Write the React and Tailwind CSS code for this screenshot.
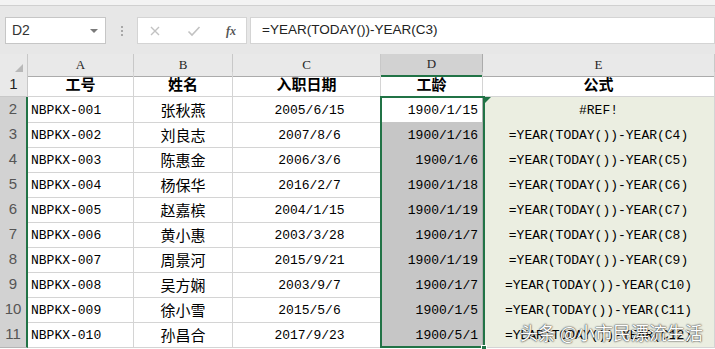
import React from "react";

const ROWS = [
  ["NBPKX-001", "张秋燕", "2005/6/15", "1900/1/15", "#REF!"],
  ["NBPKX-002", "刘良志", "2007/8/6", "1900/1/16", "=YEAR(TODAY())-YEAR(C4)"],
  ["NBPKX-003", "陈惠金", "2006/3/6", "1900/1/6", "=YEAR(TODAY())-YEAR(C5)"],
  ["NBPKX-004", "杨保华", "2016/2/7", "1900/1/18", "=YEAR(TODAY())-YEAR(C6)"],
  ["NBPKX-005", "赵嘉槟", "2004/1/15", "1900/1/19", "=YEAR(TODAY())-YEAR(C7)"],
  ["NBPKX-006", "黄小惠", "2003/3/28", "1900/1/7", "=YEAR(TODAY())-YEAR(C8)"],
  ["NBPKX-007", "周景河", "2015/9/21", "1900/1/19", "=YEAR(TODAY())-YEAR(C9)"],
  ["NBPKX-008", "吴方娴", "2003/9/7", "1900/1/7", "=YEAR(TODAY())-YEAR(C10)"],
  ["NBPKX-009", "徐小雪", "2015/5/6", "1900/1/5", "=YEAR(TODAY())-YEAR(C11)"],
  ["NBPKX-010", "孙昌合", "2017/9/23", "1900/5/1", "=YEAR(TODAY())-YEAR(C12)"],
];

const GRID = "grid grid-cols-[28px_106px_99px_148px_102px_1fr]";
const MONO = "font-['Liberation_Mono','Noto_Sans_CJK_SC',monospace] text-[13px]";
const CJK = "font-['Noto_Sans_CJK_SC',sans-serif]";

function ColHead({ label, active }) {
  return (
    <div
      className={
        active
          ? "flex items-end justify-center pb-[1px] bg-[#d2d2d2] border-r border-[#ababab] border-b-2 border-b-[#217346] text-[13px] text-[#262626] font-['Liberation_Serif',serif]"
          : "flex items-end justify-center pb-[1px] bg-[#e9e9e9] border-r border-[#c8c8c8] border-b border-b-[#ababab] text-[13px] text-[#262626] font-['Liberation_Serif',serif]"
      }
    >
      {label}
    </div>
  );
}

export default function App() {
  return (
    <div className="relative w-[715px] h-[349px] overflow-hidden bg-white">
      {/* ribbon edge */}
      <div className="h-[6px] bg-[#f3f3f3] border-b border-[#d0d0d0]" />

      {/* formula bar */}
      <div className="h-[48px] bg-[#e7e7e7] flex items-start pt-[11px] pl-[5px] font-['Liberation_Sans',sans-serif]">
        <div className="w-[101px] h-[27px] bg-white border border-[#c6c6c6] flex items-center justify-between pl-[6px] pr-[7px]">
          <span className="text-[14px] text-[#333]">D2</span>
          <span className="w-0 h-0 border-l-[4px] border-r-[4px] border-t-[4px] border-l-transparent border-r-transparent border-t-[#7a7a7a]" />
        </div>
        <div className="w-[31px] h-[27px] flex flex-col items-center justify-center gap-[2px]">
          <span className="w-[2px] h-[2px] bg-[#a8a8a8]" />
          <span className="w-[2px] h-[2px] bg-[#a8a8a8]" />
          <span className="w-[2px] h-[2px] bg-[#a8a8a8]" />
        </div>
        <div className="w-[110px] h-[27px] bg-white border border-[#d4d4d4] flex items-center pl-[11px] pr-[10px] justify-between">
          <svg width="12" height="12" viewBox="0 0 12 12">
            <path d="M2 2 L10 10 M10 2 L2 10" stroke="#c2c2c2" strokeWidth="1.4" />
          </svg>
          <svg width="14" height="12" viewBox="0 0 14 12">
            <path d="M1.5 6.5 L5 10 L12.5 2" stroke="#c2c2c2" strokeWidth="1.6" fill="none" />
          </svg>
          <span className="text-[12px] italic font-bold text-[#555] font-['Liberation_Serif',serif]">fx</span>
        </div>
        <div className="ml-[3px] flex-1 h-[27px] bg-white border border-[#d4d4d4] flex items-center pl-[11px] text-[13.5px] text-[#222]">
          =YEAR(TODAY())-YEAR(C3)
        </div>
      </div>

      {/* column headers */}
      <div className={GRID + " h-[18px]"}>
        <div className="flex items-end justify-end pr-[4px] pb-[3px] bg-[#e9e9e9] border-r border-[#c8c8c8] border-b border-b-[#ababab]">
          <svg width="9" height="9" viewBox="0 0 9 9">
            <path d="M9 0 L9 9 L0 9 Z" fill="#b8b8b8" />
          </svg>
        </div>
        <ColHead label="A" />
        <ColHead label="B" />
        <ColHead label="C" />
        <ColHead label="D" active />
        <ColHead label="E" />
      </div>

      {/* header row */}
      <div className={GRID + " h-[25px]"}>
        <div className="flex items-end justify-center pb-[1px] bg-[#e9e9e9] border-r border-[#c8c8c8] border-b border-b-[#c8c8c8] text-[15px] text-[#222] font-['Liberation_Sans',sans-serif]">
          1
        </div>
        {["工号", "姓名", "入职日期", "工龄", "公式"].map((h) => (
          <div
            key={h}
            className={"flex items-center justify-center border-r border-b border-[#d4d4d4] text-[15px] font-bold text-black " + CJK}
          >
            {h}
          </div>
        ))}
      </div>

      {ROWS.map((r, i) => (
        <div key={r[0]} className={GRID + " h-[25px]"}>
          <div className="flex items-end justify-center pb-[1px] bg-[#d2d2d2] border-r-2 border-[#217346] border-b border-b-[#b5b5b5] text-[15px] text-[#555] font-['Liberation_Sans',sans-serif]">
            {i + 2}
          </div>
          <div className={"flex items-center pt-[3px] pl-[3px] border-r border-b border-[#d4d4d4] text-black " + MONO}>
            {r[0]}
          </div>
          <div className={"flex items-center justify-center pt-[2px] border-r border-b border-[#d4d4d4] text-[15px] text-black " + CJK}>
            {r[1]}
          </div>
          <div className={"flex items-center justify-center pt-[3px] pl-[6px] border-r border-b border-[#d4d4d4] text-black " + MONO}>
            {r[2]}
          </div>
          <div
            className={
              (i === 0 ? "bg-white " : "bg-[#c6c6c6] ") +
              "flex items-center justify-end pt-[3px] pr-[4px] border-r border-b border-[#aeaeae] text-black " +
              MONO
            }
          >
            {r[3]}
          </div>
          <div className={"relative flex items-center justify-center pt-[3px] bg-[#ebeee1] border-r border-b border-[#d4d4d4] text-black " + MONO}>
            {i === 0 && (
              <span className="absolute left-[2px] top-0 w-0 h-0 border-t-[6px] border-r-[6px] border-t-[#217346] border-r-transparent" />
            )}
            {r[4]}
          </div>
        </div>
      ))}

      {/* selection border D2:D11 */}
      <div className="absolute left-[380px] top-[96px] w-[105px] h-[252px] border-2 border-[#217346] pointer-events-none" />
      <div className="absolute left-[481px] top-[345px] w-[6px] h-[6px] bg-[#217346] border border-white" />

      {/* watermark */}
      <div className="absolute left-[520px] top-[320px] whitespace-nowrap text-[18px] leading-[24px] text-white font-['Noto_Sans_CJK_SC',sans-serif] [text-shadow:0_0_2px_#333,0_0_1px_#333]">
        头条 @小市民漂流生活
      </div>
    </div>
  );
}
